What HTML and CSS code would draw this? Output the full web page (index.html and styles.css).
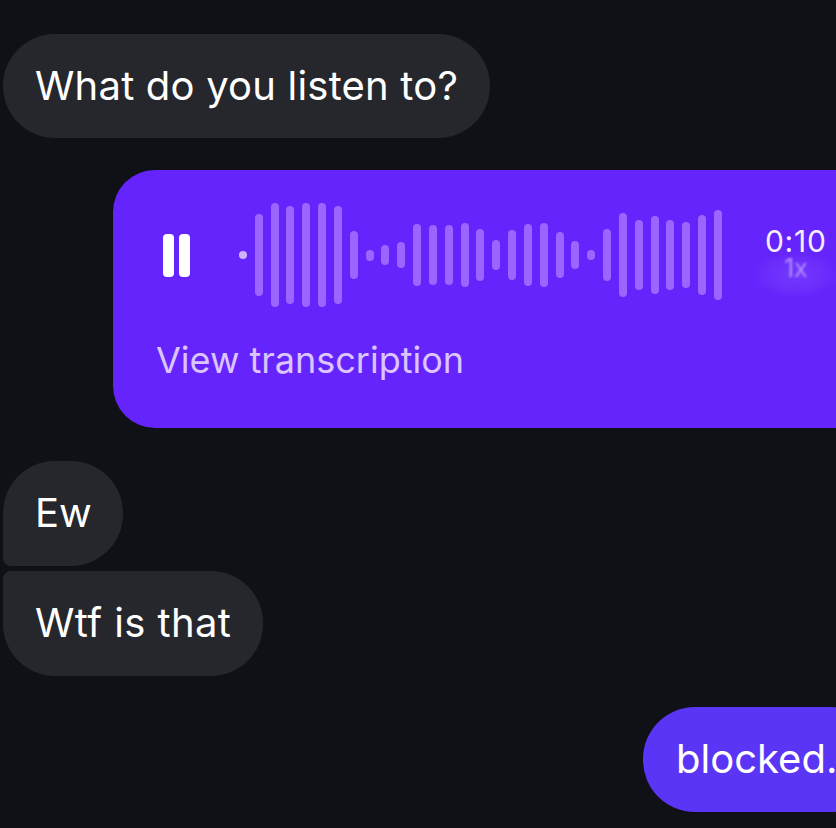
FILE: index.html
```html
<!DOCTYPE html>
<html lang="en">
<head>
<meta charset="utf-8">
<title>Chat</title>
<link rel="stylesheet" href="styles.css">
</head>
<body>
<main class="chat">
  <div class="bubble in first">What do you listen to?</div>
  <div class="voice">
    <div class="player">
      <div class="pause"><span></span><span></span></div>
      <div class="wave">
        <i style="height:8px"></i><i style="height:82px"></i><i style="height:104px"></i><i style="height:98px"></i><i style="height:104px"></i><i style="height:104px"></i><i style="height:98px"></i><i style="height:48px"></i><i style="height:11px"></i><i style="height:20px"></i><i style="height:26px"></i><i style="height:62px"></i><i style="height:60px"></i><i style="height:60px"></i><i style="height:64px"></i><i style="height:52px"></i><i style="height:30px"></i><i style="height:50px"></i><i style="height:62px"></i><i style="height:64px"></i><i style="height:46px"></i><i style="height:28px"></i><i style="height:10px"></i><i style="height:52px"></i><i style="height:84px"></i><i style="height:70px"></i><i style="height:78px"></i><i style="height:70px"></i><i style="height:66px"></i><i style="height:80px"></i><i style="height:90px"></i>
      </div>
      <div class="meta">
        <span class="time">0:10</span>
        <span class="speed">1x</span>
      </div>
    </div>
    <div class="transcribe">View transcription</div>
  </div>
  <div class="bubble in short tail-bottom">Ew</div>
  <div class="bubble in tail-top">Wtf is that</div>
  <div class="bubble out">blocked.</div>
</main>
</body>
</html>
```

FILE: styles.css
```css
* {
  box-sizing: border-box;
}

html,
body {
  margin: 0;
  height: 828px;
  overflow: hidden;
  background: #101116;
}

.chat {
  display: flex;
  flex-direction: column;
  align-items: flex-start;
  width: 836px;
  height: 828px;
  padding: 34px 0 0 3px;
  overflow: hidden;
  font-family: Inter, "Liberation Sans", sans-serif;
  color: #fff;
}

.bubble {
  flex: none;
  height: 105px;
  border-radius: 52px;
  font-size: 40px;
  line-height: 103px;
  white-space: nowrap;
}

.in {
  padding: 0 32px;
  background: #26272c;
}

.first {
  height: 104px;
  padding-right: 32px;
  letter-spacing: 0.2px;
  line-height: 104px;
}

.short {
  width: 120px;
  margin-top: 33px;
}

.tail-bottom {
  border-bottom-left-radius: 8px;
}

.tail-top {
  width: 260px;
  margin-top: 5px;
  border-top-left-radius: 8px;
  letter-spacing: 0.4px;
}

.voice {
  flex: none;
  width: 780px;
  height: 258px;
  margin: 32px 0 0 110px;
  padding: 30px 0 0 43px;
  border-radius: 42px;
  background: #6524fb;
}

.player {
  display: flex;
  align-items: center;
  height: 110px;
}

.pause {
  display: flex;
  gap: 5px;
  margin-left: 7px;
}

.pause span {
  width: 11px;
  height: 43px;
  border-radius: 4px;
  background: #fff;
}

.wave {
  display: flex;
  align-items: center;
  gap: 7.83px;
  margin-left: 49px;
}

.wave i {
  display: block;
  width: 8px;
  border-radius: 4px;
  background: #9a66ff;
}

.wave i:first-child {
  background: #cfb4ff;
}

.meta {
  flex: none;
  display: flex;
  flex-direction: column;
  align-items: center;
  width: 90px;
  margin-left: 29px;
  padding: 20px 0 24px;
  background: radial-gradient(ellipse 44px 24px at 50% 70%, #7439fd 0%, #6d2ffc 55%, #6524fb 100%);
}

.time {
  font-size: 30px;
  line-height: 30px;
  letter-spacing: 0.8px;
  white-space: nowrap;
  color: #f4edff;
}

.speed {
  font-size: 25px;
  line-height: 24px;
  color: #b08cff;
  filter: blur(1px);
}

.transcribe {
  margin-top: 28px;
  font-size: 36px;
  line-height: 44px;
  white-space: nowrap;
  color: #dcc4ff;
}

.out {
  width: 240px;
  margin: 31px 0 0 640px;
  padding-left: 33px;
  background: #5b35f5;
}
```
